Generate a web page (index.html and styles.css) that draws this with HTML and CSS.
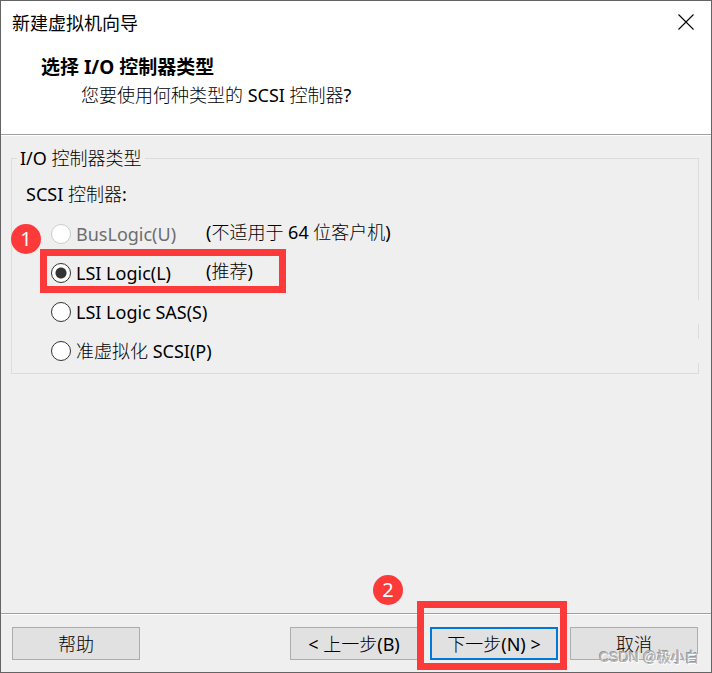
FILE: index.html
```html
<!DOCTYPE html>
<html lang="zh-CN">
<head>
<meta charset="utf-8">
<meta name="viewport" content="width=device-width, initial-scale=1">
<title>新建虚拟机向导</title>
<link rel="stylesheet" href="styles.css">
</head>
<body>
<form class="dialog">
  <header class="header">
    <div class="titlebar">
      <span class="title">新建虚拟机向导</span>
      <button class="close" type="button" aria-label="关闭">
        <svg width="16" height="16" viewBox="0 0 16 16" aria-hidden="true"><path d="M.5.5l15 15M15.500.5l-15 15" fill="none" stroke="#000" stroke-width="1.1"/></svg>
      </button>
    </div>
    <h1 class="heading">选择 I/O 控制器类型</h1>
    <p class="subheading">您要使用何种类型的 SCSI 控制器?</p>
  </header>
  <main class="content">
    <fieldset class="group">
      <legend>I/O 控制器类型</legend>
      <p class="group-label">SCSI 控制器:</p>
      <div class="options">
        <div class="option disabled">
          <input type="radio" name="controller" id="buslogic" disabled>
          <label for="buslogic">BusLogic(U)</label>
          <span class="note">(不适用于 64 位客户机)</span>
          <span class="step step-one">1</span>
        </div>
        <div class="option">
          <input type="radio" name="controller" id="lsi" checked>
          <label for="lsi">LSI Logic(L)</label>
          <span class="note">(推荐)</span>
          <span class="mark mark-option"></span>
        </div>
        <div class="option wide">
          <input type="radio" name="controller" id="sas">
          <label for="sas">LSI Logic SAS(S)</label>
        </div>
        <div class="option wide">
          <input type="radio" name="controller" id="pvscsi">
          <label for="pvscsi">准虚拟化 SCSI(P)</label>
        </div>
      </div>
    </fieldset>
  </main>
  <footer class="footer">
    <button class="btn" type="button">帮助</button>
    <div class="actions">
      <button class="btn" type="button">&lt; 上一步(B)</button>
      <div class="next">
        <button class="btn primary" type="button">下一步(N) &gt;</button>
        <span class="mark mark-next"></span>
        <span class="step step-two">2</span>
      </div>
      <button class="btn" type="button">取消</button>
    </div>
    <span class="watermark">CSDN @极小白</span>
  </footer>
</form>
</body>
</html>
```
FILE: styles.css
```css
* {
  box-sizing: border-box;
}

body {
  margin: 0;
  color: #000;
  font: 18px/24px "Noto Sans", "Noto Sans CJK SC Light", "Noto Sans CJK SC", sans-serif;
}

.dialog {
  display: flex;
  flex-direction: column;
  min-height: 100vh;
  border: 1px solid #646464;
  background: #efefef;
}

.header {
  padding-bottom: 26px;
  border-bottom: 1px solid #a0a0a0;
  background: #fff;
  box-shadow: 0 1px #fff;
}

.titlebar {
  display: flex;
  align-items: center;
  justify-content: space-between;
  height: 41px;
  padding: 0 17px 0 11px;
}

.title {
  font-family: "Noto Sans CJK SC", sans-serif;
}

.close {
  display: flex;
  padding: 0;
  border: 0;
  background: none;
}

.heading {
  margin: 12px 0 0 40px;
  font-family: "Noto Sans", "Noto Sans CJK SC", sans-serif;
  font-size: 19px;
  line-height: 26px;
}

.subheading {
  margin: 2px 0 0 80px;
  line-height: 26px;
}

.content {
  flex: 1;
  padding: 11px 12px 12px 10px;
}

.group {
  min-width: 0;
  margin: 0;
  padding: 12px 0 10px 14px;
  border: 1px solid #dcdcdc;
}

.group legend {
  margin-left: -9px;
  padding: 0 3px;
}

.group-label {
  margin: 0 0 16px;
}

.options {
  display: grid;
  gap: 15px;
}

.option {
  position: relative;
  display: grid;
  grid-template: 24px / 25px 130px 1fr;
  align-items: center;
  padding-left: 25px;
}

.wide {
  grid-template-columns: 25px 1fr;
  margin-right: -4px;
  background: #efefef;
}

.option input {
  appearance: none;
  width: 20px;
  height: 20px;
  margin: 0;
  border: 1px solid #333;
  border-radius: 50%;
  background: #fff;
}

.option input:checked {
  background: radial-gradient(circle, #333 0 5px, #fff 6px);
}

.option input:disabled {
  border-color: #ccc;
}

.disabled label {
  color: #6d6d6d;
}

.note {
  align-self: start;
  line-height: 20px;
}

.footer {
  position: relative;
  display: flex;
  justify-content: space-between;
  padding: 13px 13px 12px 11px;
  border-top: 1px solid #a0a0a0;
  box-shadow: inset 0 1px #fff;
}

.actions {
  display: flex;
  gap: 12px;
}

.next {
  position: relative;
}

.btn {
  display: block;
  width: 128px;
  height: 33px;
  padding: 0;
  border: 1px solid #adadad;
  background: #e1e1e1;
  color: #000;
  font-family: inherit;
  font-size: 18px;
  line-height: 24px;
}

.primary {
  border: 2px solid #0078d7;
}

.mark {
  position: absolute;
  border: 7px solid #fc3a3a;
  pointer-events: none;
}

.mark-option {
  top: -12px;
  left: 14px;
  width: 246px;
  height: 44px;
}

.mark-next {
  inset: -26px -9px -10px -13px;
}

.step {
  position: absolute;
  width: 30px;
  height: 30px;
  border-radius: 50%;
  background: #fc3a3a;
  color: #fff;
  font: 20px/30px "Noto Sans", sans-serif;
  text-align: center;
}

.step-one {
  top: 2px;
  left: -15px;
}

.step-two {
  top: -52px;
  left: -57px;
}

.watermark {
  position: absolute;
  right: 12px;
  bottom: 3px;
  color: #b4b4b4;
  font: 14px/24px "Liberation Sans", "Noto Sans CJK SC", sans-serif;
  text-shadow: 1px 1px #fff, -1px -1px #999;
}
```
